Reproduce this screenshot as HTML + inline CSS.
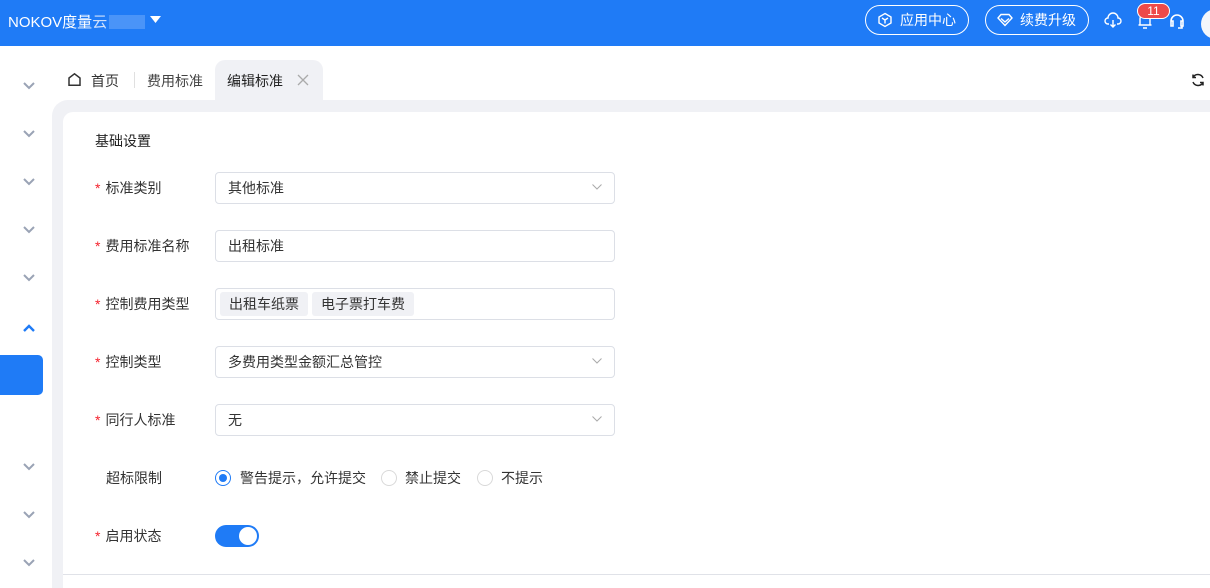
<!DOCTYPE html>
<html><head><meta charset="utf-8"><style>
*{margin:0;padding:0;box-sizing:border-box}
body{width:1210px;height:588px;overflow:hidden;background:#fff;font-family:"Liberation Sans","Noto Sans CJK SC",sans-serif;font-size:14px;color:#333;position:relative}
.top{position:absolute;left:0;top:0;width:1210px;height:46px;background:#1f7bf6;color:#fff}
.abs{position:absolute}
.pill{position:absolute;top:5px;height:30px;border:1px solid #fff;border-radius:15px;color:#fff;font-size:14px;line-height:28px;padding-left:34px}
.chev{position:absolute;left:23px;width:12px;height:8px}
.grey{position:absolute;left:52px;top:100px;width:1158px;height:488px;background:#f0f1f5;border-top-left-radius:16px}
.card{position:absolute;left:63px;top:112px;width:1147px;height:476px;background:#fff;border-top-left-radius:10px}
.lab{position:absolute;left:95px;font-size:14px;color:#333}
.lab b{color:#f5222d;font-weight:normal;margin-right:5px}
.inp{position:absolute;left:215px;width:400px;height:32px;border:1px solid #dcdfe6;border-radius:4px;padding-left:12px;line-height:30px;color:#333}
.arr{position:absolute;right:12px;top:11px;width:10px;height:6px}
.tag{display:inline-block;background:#f0f1f5;border-radius:3px;padding:0 9px;height:24px;line-height:24px;margin-top:3px;margin-right:4px}
.radio{position:absolute;top:470px;width:16px;height:16px;border:1px solid #d9d9d9;border-radius:50%}
</style></head><body>
<div class="top">
 <div class="abs" style="left:8px;top:11px;font-size:15px">NOKOV度量<span style="color:#cfe0fb">云</span><span style="display:inline-block;width:36px;height:14px;background:#4a94f8;margin:0 2px;vertical-align:-2px"></span></div>
 <svg class="abs" style="left:150px;top:16px" width="11" height="7"><path d="M0 0H11L5.5 7Z" fill="#fff"/></svg>
 <div class="pill" style="left:865px;width:104px">应用中心
  <svg class="abs" style="left:11px;top:6px" width="16" height="16" fill="none" stroke="#fff" stroke-width="1.4"><path d="M8 1.5L14 5V11L8 14.5L2 11V5Z M5 6L8 8L11 6 M8 8V11.5"/></svg></div>
 <div class="pill" style="left:985px;width:104px">续费升级
  <svg class="abs" style="left:11px;top:7px" width="16" height="14" fill="none" stroke="#fff" stroke-width="1.4"><path d="M4 1.5H12L15 5L8 12.5L1 5Z M4 5.5L8 9L12 5.5"/></svg></div>
 <svg class="abs" style="left:1104px;top:12px" width="18" height="16" fill="none" stroke="#fff" stroke-width="1.4"><path d="M5 12H4A3 3 0 0 1 4 6A5 5 0 0 1 14 6A3 3 0 0 1 14 12H13 M9 8V15 M6.5 12.5L9 15L11.5 12.5"/></svg>
 <svg class="abs" style="left:1137px;top:12px" width="16" height="18" fill="none" stroke="#fff" stroke-width="1.4"><path d="M3 13V7A5 5 0 0 1 13 7V13 M1.5 13H14.5 M6 16H10"/></svg>
 <div class="abs" style="left:1137px;top:3px;width:33px;height:16px;background:#ee4a4a;border:1px solid #fff;border-radius:8px;font-size:12px;line-height:14px;text-align:center">11</div>
 <svg class="abs" style="left:1168px;top:12px" width="18" height="18" fill="none" stroke="#fff" stroke-width="1.6"><path d="M3 11V9A6 6 0 0 1 15 9V11 M3 9H5V14H3Z M15 9H13V14H15Z M14 14V16H10"/></svg>
 <div class="abs" style="left:1201px;top:9px;width:30px;height:30px;border-radius:50%;background:#f3f6fb"></div>
</div>
<!-- sidebar chevrons -->
<svg class="chev" style="top:82px"><path d="M1 1L6 6L11 1" stroke="#9aa3b5" stroke-width="2" fill="none"/></svg>
<svg class="chev" style="top:130px"><path d="M1 1L6 6L11 1" stroke="#9aa3b5" stroke-width="2" fill="none"/></svg>
<svg class="chev" style="top:178px"><path d="M1 1L6 6L11 1" stroke="#9aa3b5" stroke-width="2" fill="none"/></svg>
<svg class="chev" style="top:226px"><path d="M1 1L6 6L11 1" stroke="#9aa3b5" stroke-width="2" fill="none"/></svg>
<svg class="chev" style="top:274px"><path d="M1 1L6 6L11 1" stroke="#9aa3b5" stroke-width="2" fill="none"/></svg>
<svg class="chev" style="top:324px"><path d="M1 7L6 2L11 7" stroke="#1f7bf6" stroke-width="2.4" fill="none"/></svg>
<div class="abs" style="left:0;top:355px;width:43px;height:40px;background:#1f7bf6;border-radius:0 5px 5px 0"></div>
<svg class="chev" style="top:463px"><path d="M1 1L6 6L11 1" stroke="#9aa3b5" stroke-width="2" fill="none"/></svg>
<svg class="chev" style="top:511px"><path d="M1 1L6 6L11 1" stroke="#9aa3b5" stroke-width="2" fill="none"/></svg>
<svg class="chev" style="top:559px"><path d="M1 1L6 6L11 1" stroke="#9aa3b5" stroke-width="2" fill="none"/></svg>
<!-- tabs -->
<div class="grey"></div>
<div class="abs" style="left:215px;top:60px;width:108px;height:42px;background:#f0f1f5;border-radius:10px 10px 0 0"></div>
<svg class="abs" style="left:67px;top:72px" width="15" height="15" fill="none" stroke="#333" stroke-width="1.5"><path d="M2 6L7.5 1.8L13 6V13.2H2Z"/></svg>
<div class="abs" style="left:91px;top:71px;color:#333">首页</div>
<div class="abs" style="left:134px;top:72px;width:1px;height:16px;background:#e0e0e0"></div>
<div class="abs" style="left:147px;top:71px;color:#444">费用标准</div>
<div class="abs" style="left:227px;top:71px;color:#222">编辑标准</div>
<svg class="abs" style="left:297px;top:74px" width="12" height="12" stroke="#aaa" stroke-width="1.3"><path d="M1 1L11 11M11 1L1 11"/></svg>
<svg class="abs" style="left:1190px;top:72px" width="16" height="16" fill="none" stroke="#222" stroke-width="1.5"><path d="M13 6A5.5 5.5 0 0 0 3 5.5 M3 10A5.5 5.5 0 0 0 13 10.5 M3 2.5V5.5H6 M13 13.5V10.5H10"/></svg>
<div class="card"></div>
<div class="abs" style="left:95px;top:131px;color:#222">基础设置</div>
<div class="lab" style="top:178px"><b>*</b>标准类别</div>
<div class="inp" style="top:172px">其他标准<svg class="arr"><path d="M0.5 0.5L5 5L9.5 0.5" stroke="#aaa" fill="none"/></svg></div>
<div class="lab" style="top:236px"><b>*</b>费用标准名称</div>
<div class="inp" style="top:230px">出租标准</div>
<div class="lab" style="top:294px"><b>*</b>控制费用类型</div>
<div class="inp" style="top:288px;padding-left:4px"><span class="tag">出租车纸票</span><span class="tag">电子票打车费</span></div>
<div class="lab" style="top:352px"><b>*</b>控制类型</div>
<div class="inp" style="top:346px">多费用类型金额汇总管控<svg class="arr"><path d="M0.5 0.5L5 5L9.5 0.5" stroke="#aaa" fill="none"/></svg></div>
<div class="lab" style="top:410px"><b>*</b>同行人标准</div>
<div class="inp" style="top:404px">无<svg class="arr"><path d="M0.5 0.5L5 5L9.5 0.5" stroke="#aaa" fill="none"/></svg></div>
<div class="lab" style="top:468px;left:106px">超标限制</div>
<div class="radio" style="left:215px;border-color:#1f7bf6"><div style="width:8px;height:8px;border-radius:50%;background:#1f7bf6;margin:3px"></div></div>
<div class="abs" style="left:240px;top:468px">警告提示，允许提交</div>
<div class="radio" style="left:381px"></div>
<div class="abs" style="left:405px;top:468px">禁止提交</div>
<div class="radio" style="left:477px"></div>
<div class="abs" style="left:501px;top:468px">不提示</div>
<div class="lab" style="top:526px"><b>*</b>启用状态</div>
<div class="abs" style="left:215px;top:525px;width:44px;height:22px;border-radius:11px;background:#1f7bf6"><div style="position:absolute;right:2px;top:2px;width:18px;height:18px;border-radius:50%;background:#fff"></div></div>
<div class="abs" style="left:63px;top:574px;width:1147px;height:1px;background:#e0e2e8"></div>
</body></html>
